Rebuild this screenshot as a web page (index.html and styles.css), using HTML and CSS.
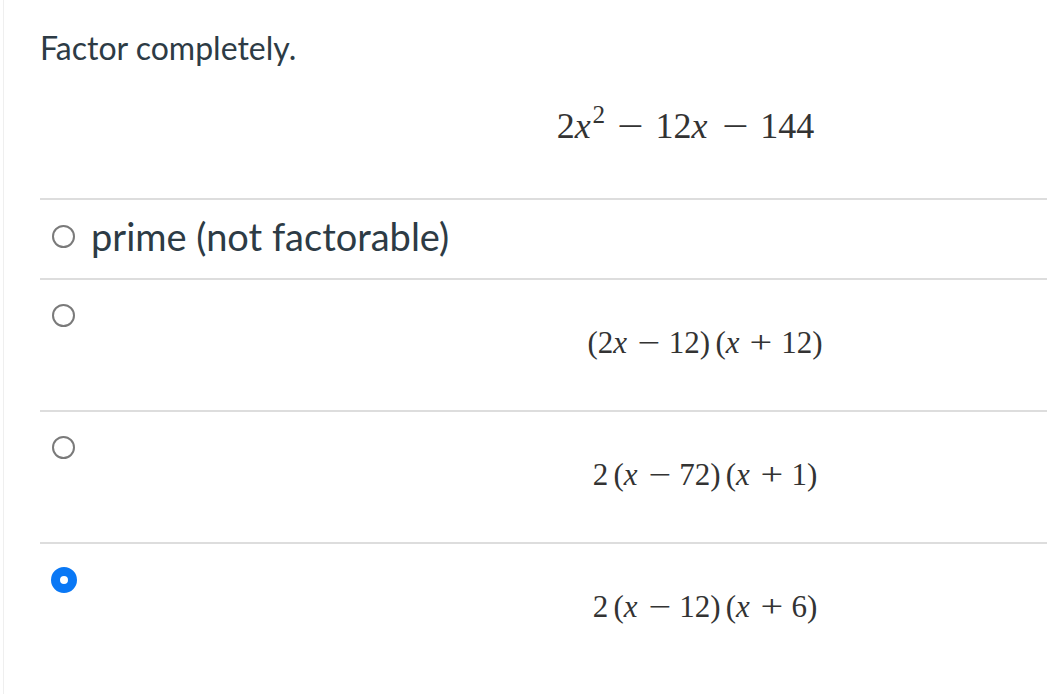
FILE: index.html
```html
<!DOCTYPE html>
<html lang="en">
<head>
<meta charset="utf-8">
<title>Factor completely</title>
<link rel="stylesheet" href="styles.css">
</head>
<body>
<div class="page">
  <div class="question">
    <p class="prompt">Factor completely.</p>
    <div class="equation">
      <span class="math">2<i>x</i><sup>2</sup><span class="op">−</span>12<i>x</i><span class="op">−</span>144</span>
    </div>
  </div>
  <ul class="answers">
    <li class="answer answer-text">
      <span class="radio"><span class="dot"></span></span>
      <span class="label">prime (not factorable)</span>
    </li>
    <li class="answer answer-math">
      <span class="radio"><span class="dot"></span></span>
      <div class="math-wrap"><span class="math">(2<i>x</i><span class="op">−</span>12)<span class="thin"></span>(<i>x</i><span class="op">+</span>12)</span></div>
    </li>
    <li class="answer answer-math">
      <span class="radio"><span class="dot"></span></span>
      <div class="math-wrap"><span class="math">2<span class="thin"></span>(<i>x</i><span class="op">−</span>72)<span class="thin"></span>(<i>x</i><span class="op">+</span>1)</span></div>
    </li>
    <li class="answer answer-math">
      <span class="radio checked"><span class="dot"></span></span>
      <div class="math-wrap"><span class="math">2<span class="thin"></span>(<i>x</i><span class="op">−</span>12)<span class="thin"></span>(<i>x</i><span class="op">+</span>6)</span></div>
    </li>
  </ul>
</div>
</body>
</html>
```

FILE: styles.css
```css
html, body {
  margin: 0;
  padding: 0;
  background: #ffffff;
  overflow: hidden;
}

.page {
  margin-left: 3px;
  border-left: 1px solid #efefef;
  min-height: 694px;
  box-sizing: border-box;
  padding-left: 36px;
  font-family: Lato, "Open Sans", sans-serif;
  color: #2d3b45;
}

.question {
  padding-top: 28px;
}

.prompt {
  margin: 0;
  font-size: 32px;
  line-height: 40px;
}

.equation {
  margin-top: 33px;
  margin-bottom: 47px;
  padding-left: 284px;
  text-align: center;
  font-family: "Liberation Serif", "Times New Roman", serif;
  font-size: 36px;
  line-height: 50px;
  height: 50px;
}

.equation .op {
  margin: 0 0.42em;
}

.math {
  font-family: "Liberation Serif", "Times New Roman", serif;
  color: #333333;
  white-space: nowrap;
}

.math i {
  font-style: italic;
  margin-right: 0.06em;
}

.math sup {
  font-size: 0.7em;
  line-height: 0;
  vertical-align: 0.6em;
  margin-left: -0.02em;
}

.op {
  display: inline-block;
  margin: 0 0.36em;
  transform: scaleX(1.3);
}

.thin {
  display: inline-block;
  width: 0.17em;
}

.answers {
  list-style: none;
  margin: 0;
  padding: 0;
}

.answer {
  display: flex;
  border-top: 2px solid #dddddd;
}

.answer-text {
  align-items: center;
  padding: 18px 0 24px;
  font-size: 38px;
  line-height: 36px;
  height: 36px;
}

.answer-math {
  align-items: flex-start;
}

.radio {
  flex: none;
  width: 27px;
  height: 27px;
  margin-left: 10px;
  display: flex;
  align-items: center;
  justify-content: center;
}

.answer-math .radio {
  margin-top: 22px;
}

.dot {
  width: 23px;
  height: 23px;
  box-sizing: border-box;
  border: 2px solid #7a7a7a;
  border-radius: 50%;
  background: #ffffff;
}

.radio.checked .dot {
  width: 26px;
  height: 26px;
  border: 9px solid #0a78f5;
}

.label {
  margin-left: 14px;
}

.math-wrap {
  flex: 1;
  padding: 45px 0 49px 286px;
  text-align: center;
  font-family: "Liberation Serif", "Times New Roman", serif;
  font-size: 31px;
  line-height: 36px;
  height: 36px;
}
```
